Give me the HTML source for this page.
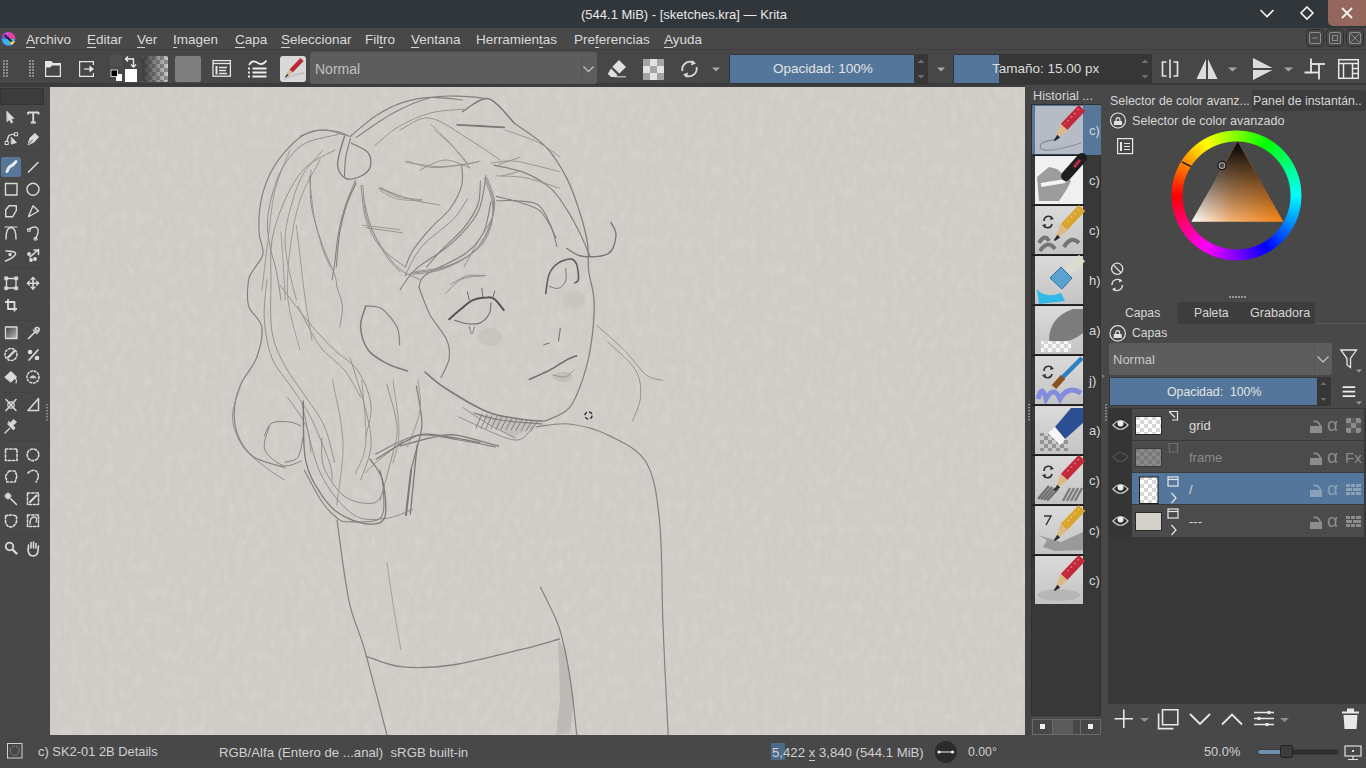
<!DOCTYPE html>
<html><head><meta charset="utf-8">
<style>
*{margin:0;padding:0;box-sizing:border-box}
html,body{width:1366px;height:768px;overflow:hidden;background:#484848;font-family:"Liberation Sans",sans-serif;color:#d4d4d4}
div,span,svg{position:absolute}
.t{white-space:nowrap;line-height:1}
.mi{top:33px;font-size:13.5px;color:#dadada}
.mi u{text-decoration:none;border-bottom:1px solid #d0d0d0;padding-bottom:0}
</style></head><body>
<!-- base regions -->
<div style="left:0;top:0;width:1366px;height:28px;background:#31363b"></div>
<div style="left:0;top:28px;width:1366px;height:21px;background:#484848"></div>
<div style="left:0;top:49px;width:1366px;height:1px;background:#3f3f3f"></div>
<div style="left:0;top:50px;width:1366px;height:33px;background:#474747"></div>
<div style="left:0;top:83px;width:1366px;height:2px;background:#3a3a3a"></div><div style="left:0;top:85px;width:1025px;height:2px;background:#3d3d3d"></div>
<div style="left:50px;top:87px;width:975px;height:648px;background:#cfccc7"></div>
<div id="canvas" style="left:50px;top:87px;width:975px;height:648px;overflow:hidden"><svg style="left:0;top:0" width="975" height="648" viewBox="50 87 975 648">
<defs><filter id="tex" x="0" y="0" width="100%" height="100%"><feTurbulence type="fractalNoise" baseFrequency="0.14 0.08" numOctaves="3" seed="7"/><feColorMatrix type="matrix" values="0 0 0 0 1  0 0 0 0 1  0 0 0 0 0.98  0 0 0 -2.2 1.25"/></filter></defs>
<rect x="50" y="87" width="975" height="648" filter="url(#tex)" opacity="0.13"/>
<defs><filter id="soft" x="-5%" y="-5%" width="110%" height="110%"><feGaussianBlur stdDeviation="0.35"/></filter></defs>
<ellipse cx="490" cy="337" rx="12" ry="9" fill="#b8b2ad" opacity="0.35"/>
<ellipse cx="574" cy="300" rx="11" ry="9" fill="#b8b2ad" opacity="0.3"/>
<ellipse cx="563" cy="377" rx="10" ry="5" fill="#a8a39f" opacity="0.35"/>
<path d="M558 640 L566 650 L574 700 L570 733 L556 735 L560 700 Z" fill="#b0aca8" opacity="0.6"/>
<path d="M478 414 L540 423 L512 438 Z" fill="#9d9a96" opacity="0.25"/>
<g fill="none" stroke-linecap="round" filter="url(#soft)" opacity="0.85">
<path d="M345.0 135.2 C341.5 134.3 331.1 130.0 324.2 130.0 C317.2 130.0 310.2 131.1 303.3 135.2 C296.4 139.3 288.4 147.5 282.5 154.7 C276.6 161.8 271.9 169.8 268.2 178.1 C264.5 186.3 261.9 195.1 260.4 204.2 C258.9 213.3 258.7 224.6 259.1 232.8 C259.5 241.1 263.9 247.6 263.0 253.7 C262.1 259.8 256.3 264.9 253.9 269.3 C251.5 273.7 249.5 273.9 248.6 280.0 C247.7 286.1 246.4 298.2 248.6 306.0 C250.8 313.8 260.4 318.2 261.7 326.9 C263.0 335.6 260.0 348.4 256.5 358.0 C253.0 367.6 244.5 375.5 240.8 384.2 C237.1 392.9 234.7 401.5 234.3 410.2 C233.9 418.9 234.9 428.4 238.2 436.2 C241.5 444.1 246.1 451.8 253.9 457.0 C261.7 462.2 279.8 465.8 285.0 467.5" stroke="#777470" stroke-width="1.2"/>
<path d="M335.0 150.0 C330.0 153.0 313.3 159.7 305.0 168.0 C296.7 176.3 290.5 188.0 285.0 200.0 C279.5 212.0 274.3 226.7 272.0 240.0 C269.7 253.3 271.0 264.7 271.0 280.0 C271.0 295.3 269.7 317.7 272.0 332.0 C274.3 346.3 279.3 355.1 285.0 366.0 C290.7 376.9 299.5 387.2 306.0 397.2 C312.5 407.2 319.4 414.9 324.2 425.8 C329.0 436.7 332.9 456.2 334.6 462.3" stroke="#8a8782" stroke-width="1.0"/>
<path d="M311.0 170.0 C311.0 175.7 309.2 191.8 311.0 204.0 C312.8 216.2 317.7 231.2 321.6 243.0 C325.5 254.8 332.0 267.2 334.6 274.5 C337.2 281.8 335.7 281.8 337.0 287.0 C338.3 292.2 341.9 299.3 342.4 306.0 C342.9 312.7 340.2 323.5 339.8 327.0" stroke="#858280" stroke-width="1.0"/>
<path d="M355.4 180.8 C353.7 185.1 347.8 198.1 345.0 206.8 C342.2 215.5 340.2 223.3 338.5 232.8 C336.8 242.3 335.7 256.1 334.6 264.0 C333.5 271.9 332.4 277.3 332.0 280.0" stroke="#777470" stroke-width="1.1"/>
<path d="M280.0 285.0 C284.3 290.7 297.3 308.6 306.0 319.0 C314.7 329.4 323.3 339.0 332.0 347.7 C340.7 356.4 351.5 361.4 358.0 371.0 C364.5 380.6 369.7 394.1 371.0 405.0 C372.3 415.9 366.7 431.0 365.8 436.2" stroke="#8a8782" stroke-width="1.0"/>
<path d="M264.3 436.0 C265.6 433.8 267.7 425.3 272.0 423.0 C276.3 420.7 285.2 421.5 290.0 422.0 C294.8 422.5 298.9 425.2 300.7 425.8" stroke="#777470" stroke-width="1.0"/>
<path d="M303.3 436.0 C302.4 439.5 301.1 452.6 298.0 457.0 C294.9 461.4 287.2 461.4 285.0 462.3" stroke="#777470" stroke-width="1.0"/>
<path d="M304.2 470.0 C307.1 475.2 315.9 493.0 321.4 501.0 C326.9 509.0 332.4 514.5 337.0 518.0 C341.6 521.5 341.8 521.8 349.0 521.8 C356.2 521.8 374.2 523.5 380.0 518.3 C385.8 513.1 383.5 498.8 383.5 490.7 C383.5 482.6 380.6 473.4 380.0 470.0" stroke="#777470" stroke-width="1.1"/>
<path d="M350.2 358.0 C352.8 366.7 362.3 395.4 365.8 410.2 C369.3 425.0 371.9 435.1 371.0 446.7 C370.1 458.3 362.3 474.4 360.6 480.0" stroke="#8a8782" stroke-width="1.0"/>
<path d="M386.7 384.0 C388.4 391.0 396.1 413.6 397.0 425.8 C397.9 438.0 394.7 444.6 391.9 457.0 C389.1 469.4 382.0 492.8 380.0 500.0" stroke="#8a8782" stroke-width="1.0"/>
<path d="M402.3 441.5 C398.0 445.0 382.3 457.1 376.2 462.3 C370.2 467.5 367.5 471.0 365.8 472.7" stroke="#8a8782" stroke-width="1.0"/>
<path d="M411.1 470.0 L406.0 514.9" stroke="#6e6b67" stroke-width="2.0"/>
<path d="M416.4 385.8 C417.3 392.2 422.1 412.5 421.9 424.0 C421.7 435.5 416.8 447.3 415.0 455.0 C413.2 462.7 411.7 467.5 411.0 470.0" stroke="#777470" stroke-width="1.3"/>
<path d="M344.5 136.2 C343.3 140.9 337.3 157.3 337.5 164.3 C337.7 171.3 341.8 176.5 345.7 178.4 C349.6 180.3 356.9 177.9 361.0 176.0 C365.1 174.1 369.1 170.6 370.3 166.7 C371.5 162.8 371.1 156.5 368.0 152.6 C364.9 148.7 354.2 144.8 351.5 143.2" stroke="#6e6b67" stroke-width="1.3"/>
<path d="M350.4 138.5 C349.6 141.6 346.7 151.1 345.7 157.3 C344.7 163.6 344.7 172.9 344.5 176.0" stroke="#6e6b67" stroke-width="1.1"/>
<path d="M350.2 136.5 C354.5 133.0 367.6 121.2 376.2 115.6 C384.9 109.9 393.1 105.6 402.3 102.6 C411.5 99.6 421.2 97.8 431.2 97.4 C441.3 97.0 457.3 99.6 462.5 100.0" stroke="#777470" stroke-width="1.2"/>
<path d="M462.5 111.7 C466.8 109.5 479.8 96.7 488.5 98.7 C497.2 100.7 510.2 119.4 514.6 123.5" stroke="#6e6b67" stroke-width="1.4"/>
<path d="M457.3 124.8 C461.1 125.0 472.2 125.6 480.0 126.0 C487.8 126.4 500.2 127.2 504.2 127.4" stroke="#6a6763" stroke-width="1.8"/>
<path d="M514.6 123.5 C519.8 127.4 537.1 137.8 545.8 146.9 C554.5 156.0 561.1 167.2 566.7 178.1 C572.4 188.9 576.2 201.2 579.7 212.0 C583.2 222.8 586.0 233.4 587.5 243.2 C589.0 253.0 587.6 261.4 588.7 271.0 C589.8 280.6 593.7 289.2 594.1 301.0 C594.5 312.8 593.2 329.2 591.4 342.0 C589.6 354.8 586.9 366.7 583.2 377.6 C579.6 388.6 575.4 400.6 569.5 407.7 C563.6 414.8 552.5 417.8 547.7 420.0 C542.9 422.2 541.9 420.8 540.8 421.0" stroke="#777470" stroke-width="1.3"/>
<path d="M400.0 130.0 C405.0 128.0 418.3 116.3 430.0 118.0 C441.7 119.7 458.3 133.0 470.0 140.0 C481.7 147.0 495.0 156.7 500.0 160.0" stroke="#8d8a85" stroke-width="1.0"/>
<path d="M420.0 170.0 C424.2 168.3 436.7 160.3 445.0 160.0 C453.3 159.7 465.8 166.7 470.0 168.0" stroke="#8d8a85" stroke-width="1.0"/>
<path d="M363.0 196.0 C364.8 202.1 367.9 221.0 373.6 232.8 C379.3 244.6 389.3 258.9 397.0 266.7 C404.7 274.5 416.2 277.5 420.0 279.7" stroke="#8a8782" stroke-width="1.0"/>
<path d="M378.9 188.6 C382.8 189.9 395.4 194.2 402.3 196.4 C409.2 198.6 413.7 200.2 420.0 201.6 C426.3 203.0 436.7 204.4 440.0 205.0" stroke="#8a8782" stroke-width="1.0"/>
<path d="M365.8 227.6 L402.3 232.8" stroke="#8d8a85" stroke-width="1.0"/>
<path d="M493.8 165.1 C499.0 166.4 515.5 169.0 525.0 172.9 C534.5 176.8 544.0 182.5 551.0 188.6 C558.0 194.7 561.9 202.0 566.7 209.4 C571.5 216.8 575.8 225.0 579.7 232.8 C583.6 240.6 588.4 252.4 590.1 256.3" stroke="#777470" stroke-width="1.2"/>
<path d="M496.4 196.4 C499.9 197.3 510.3 199.4 517.2 201.6 C524.1 203.8 532.8 205.9 538.0 209.4 C543.2 212.9 545.4 217.6 548.4 222.4 C551.4 227.2 554.9 235.4 556.2 238.0" stroke="#777470" stroke-width="1.1"/>
<path d="M486.0 175.5 C484.7 181.6 483.7 200.7 478.0 212.0 C472.3 223.3 462.4 233.6 452.0 243.2 C441.6 252.8 424.3 261.5 415.6 269.3 C406.9 277.1 402.6 286.6 400.0 290.0" stroke="#777470" stroke-width="1.1"/>
<path d="M491.0 201.6 C489.7 206.8 487.6 224.1 483.3 232.8 C479.0 241.5 474.7 246.8 465.1 253.7 C455.6 260.6 433.7 268.9 426.0 274.5 C418.3 280.1 420.2 285.2 419.0 287.3" stroke="#777470" stroke-width="1.1"/>
<path d="M611.0 222.4 C611.8 224.6 616.5 230.2 616.0 235.4 C615.5 240.6 613.9 250.2 608.3 253.7 C602.7 257.2 589.2 257.2 582.3 256.3 C575.4 255.4 569.3 249.7 566.7 248.4" stroke="#6e6b67" stroke-width="1.4"/>
<path d="M419.0 287.3 C420.8 291.9 425.4 306.0 430.0 314.7 C434.6 323.4 443.3 332.0 446.5 339.3 C449.7 346.6 450.1 352.0 449.2 358.4 C448.3 364.8 442.4 374.4 441.0 377.6" stroke="#777470" stroke-width="1.2"/>
<path d="M365.8 306.0 C364.9 309.5 360.2 319.6 360.6 327.0 C361.0 334.4 364.0 344.2 368.4 350.3 C372.8 356.4 380.2 359.8 386.7 363.3 C393.2 366.8 404.0 369.8 407.5 371.1" stroke="#6e6b67" stroke-width="1.5"/>
<path d="M365.8 306.0 C368.4 306.4 376.3 305.1 381.5 308.6 C386.7 312.1 394.0 320.8 397.0 326.9 C400.0 333.0 399.2 342.0 399.7 345.0" stroke="#777470" stroke-width="1.2"/>
<path d="M425.0 372.0 C428.3 374.7 434.7 381.4 445.0 388.0 C455.3 394.6 474.5 406.5 487.0 411.7 C499.5 416.9 511.0 417.4 520.0 419.0 C529.0 420.6 537.3 420.7 540.8 421.0" stroke="#6e6b67" stroke-width="1.5"/>
<path d="M473.8 413.0 C478.2 414.2 488.6 418.2 500.0 420.0 C511.4 421.8 535.2 423.3 542.2 424.0" stroke="#777470" stroke-width="1.2"/>
<path d="M462.9 407.7 C467.4 410.6 481.4 420.0 490.0 425.0 C498.6 430.0 510.7 435.6 514.8 437.7" stroke="#858280" stroke-width="1.0"/>
<path d="M400.0 446.0 C405.0 444.7 420.9 439.8 430.0 438.0 C439.1 436.2 443.3 433.7 454.7 435.0 C466.1 436.3 491.1 444.2 498.4 446.0" stroke="#777470" stroke-width="1.3"/>
<path d="M449.1 319.2 C451.2 317.4 457.9 311.5 461.9 308.3 C465.8 305.1 468.6 301.9 472.8 300.1 C477.1 298.3 483.8 297.5 487.4 297.4 C491.0 297.2 492.0 297.1 494.7 299.2 C497.4 301.3 502.3 308.3 503.8 310.1" stroke="#3e3c3a" stroke-width="2.0"/>
<path d="M454.6 320.2 C456.7 320.8 463.1 323.4 467.3 323.8 C471.6 324.2 476.5 324.6 480.1 322.9 C483.8 321.2 487.4 317.1 489.2 313.8 C491.0 310.5 490.7 304.6 491.0 302.8" stroke="#5e5b58" stroke-width="1.1"/>
<path d="M469.2 326.5 C469.6 327.7 471.0 333.8 471.9 333.8 C472.8 333.8 474.2 327.7 474.6 326.5" stroke="#6e6b67" stroke-width="1.0"/>
<path d="M467.3 291.9 L469.2 300.1" stroke="#5e5b58" stroke-width="1.0"/>
<path d="M481.9 288.3 L482.8 297.4" stroke="#5e5b58" stroke-width="1.0"/>
<path d="M494.7 291.0 L492.8 298.3" stroke="#5e5b58" stroke-width="1.0"/>
<path d="M445.5 293.7 C448.2 291.3 455.2 282.2 461.9 279.2 C468.6 276.2 481.7 276.1 485.6 275.5" stroke="#8a8782" stroke-width="1.0"/>
<path d="M545.7 293.7 C546.3 290.4 547.2 278.8 549.3 273.7 C551.4 268.6 554.9 265.2 558.5 262.8 C562.1 260.4 568.2 258.8 571.2 259.1 C574.2 259.4 575.5 261.2 576.7 264.6 C577.9 268.0 578.8 276.2 578.5 279.2 C578.2 282.2 575.4 282.2 574.8 282.8" stroke="#4e4c49" stroke-width="1.6"/>
<path d="M549.3 286.4 C550.8 286.7 555.8 289.2 558.5 288.3 C561.2 287.4 564.5 284.4 565.7 281.0 C566.9 277.6 565.7 270.3 565.7 268.2" stroke="#6e6b67" stroke-width="1.0"/>
<path d="M543.9 344.8 L549.3 343.0" stroke="#6e6b67" stroke-width="1.2"/>
<path d="M560.3 328.4 L558.5 341.1" stroke="#6e6b67" stroke-width="1.2"/>
<path d="M529.3 379.4 C532.6 377.9 542.9 373.6 549.3 370.3 C555.7 367.0 563.0 361.7 567.6 359.3 C572.2 356.9 575.2 356.3 576.7 355.7" stroke="#5e5b58" stroke-width="1.5"/>
<path d="M553.0 375.0 C555.0 375.3 561.5 377.8 565.0 377.0 C568.5 376.2 572.5 371.2 574.0 370.0" stroke="#8d8a85" stroke-width="1.0"/>
<path d="M596.9 325.6 C601.5 329.7 616.0 342.0 624.2 350.2 C632.4 358.4 639.7 369.8 646.1 374.8 C652.5 379.8 659.8 379.4 662.5 380.3" stroke="#8a8782" stroke-width="1.0"/>
<path d="M607.8 342.0 C612.4 346.6 629.7 360.3 635.2 369.4 C640.7 378.5 641.1 388.0 640.6 396.7 C640.1 405.4 633.8 417.2 632.4 421.3" stroke="#8a8782" stroke-width="1.0"/>
<path d="M536.7 426.8 C542.2 426.3 557.6 422.6 569.5 424.0 C581.4 425.4 595.0 428.6 607.8 435.0 C620.6 441.4 637.5 447.8 646.1 462.3 C654.7 476.8 656.8 494.6 659.6 521.8 C662.4 549.0 661.6 589.8 663.0 625.3 C664.4 660.8 667.3 716.7 668.2 735.0" stroke="#777470" stroke-width="1.2"/>
<path d="M337.0 520.0 C339.0 533.5 344.4 579.4 349.0 601.0 C353.6 622.6 358.2 627.1 364.5 649.4 C370.8 671.7 383.2 720.7 387.0 735.0" stroke="#777470" stroke-width="1.2"/>
<path d="M387.0 563.2 C388.2 571.0 391.7 595.6 394.0 610.0 C396.3 624.4 399.7 642.8 400.8 649.4" stroke="#9a9792" stroke-width="1.0"/>
<path d="M366.3 656.3 C372.1 658.0 386.4 665.2 400.8 666.7 C415.2 668.2 432.4 667.9 452.5 665.0 C472.6 662.1 503.7 653.7 521.5 649.4 C539.3 645.1 553.2 640.7 559.5 639.0" stroke="#777470" stroke-width="1.3"/>
<path d="M540.5 587.3 C543.7 594.2 554.6 613.8 559.5 628.7 C564.4 643.7 567.0 659.3 569.9 677.0 C572.8 694.7 575.6 725.3 576.8 735.0" stroke="#777470" stroke-width="1.2"/>
<path d="M356.2 137.4 C362.4 133.3 381.2 119.5 393.7 112.8 C406.2 106.1 419.5 100.2 431.2 97.5 C442.9 94.8 454.6 96.2 464.0 96.4 C473.4 96.6 483.5 98.3 487.4 98.7" stroke="#777470" stroke-width="1.1"/>
<path d="M375.0 145.6 C378.9 142.5 389.0 132.3 398.4 126.8 C407.8 121.3 420.3 115.7 431.2 112.8 C442.1 109.9 458.5 109.9 464.0 109.3" stroke="#8d8a85" stroke-width="1.0"/>
<path d="M300.0 136.2 C303.1 135.2 312.4 131.1 318.7 130.3 C324.9 129.5 332.4 130.5 337.5 131.5 C342.6 132.5 347.2 135.4 349.2 136.2" stroke="#777470" stroke-width="1.1"/>
<path d="M356.2 183.0 C354.6 186.5 349.6 196.0 346.9 204.2 C344.2 212.4 341.6 221.8 339.8 232.3 C338.0 242.8 336.9 261.2 336.3 267.0" stroke="#777470" stroke-width="1.1"/>
<path d="M361.0 185.4 C361.8 190.9 362.5 208.0 365.6 218.2 C368.7 228.3 373.1 238.2 379.7 246.3 C386.3 254.4 401.1 263.6 405.4 267.0" stroke="#858280" stroke-width="1.0"/>
<path d="M379.7 187.8 C382.8 189.3 391.4 195.1 398.4 197.1 C405.4 199.1 417.9 199.1 421.8 199.5" stroke="#8d8a85" stroke-width="1.0"/>
<path d="M431.2 124.5 C434.3 127.6 443.8 136.6 450.0 143.2 C456.2 149.8 465.6 160.8 468.7 164.3" stroke="#8d8a85" stroke-width="1.0"/>
<path d="M405.4 162.0 C411.3 162.8 428.5 166.7 440.6 166.7 C452.7 166.7 471.8 162.8 478.0 162.0" stroke="#8d8a85" stroke-width="1.0"/>
<path d="M461.7 164.3 C461.7 167.8 463.6 178.0 461.7 185.4 C459.8 192.8 455.1 201.8 450.0 208.8 C444.9 215.8 437.4 220.6 431.2 227.6 C424.9 234.6 416.8 244.4 412.5 251.0 C408.2 257.6 406.6 264.3 405.4 267.0" stroke="#777470" stroke-width="1.1"/>
<path d="M480.4 180.7 C480.0 184.6 480.7 196.4 478.0 204.2 C475.3 212.0 470.2 219.8 464.0 227.6 C457.8 235.4 446.9 244.4 440.6 251.0 C434.4 257.6 428.9 264.3 426.5 267.0" stroke="#777470" stroke-width="1.1"/>
<path d="M494.5 199.5 C494.1 202.6 494.9 211.2 492.1 218.2 C489.4 225.2 482.7 233.5 478.0 241.6 C473.3 249.7 466.3 262.8 464.0 267.0" stroke="#858280" stroke-width="1.0"/>
<path d="M499.2 164.3 L520.0 157.3" stroke="#8d8a85" stroke-width="1.0"/>
<path d="M501.5 176.0 L520.0 171.3" stroke="#8d8a85" stroke-width="1.0"/>
<path d="M309.4 176.0 C310.2 182.7 311.7 203.4 314.0 215.9 C316.3 228.4 320.6 242.5 323.4 251.0 C326.1 259.5 329.3 264.3 330.5 267.0" stroke="#8a8782" stroke-width="1.0"/>
<path d="M266.9 280.0 C266.5 286.5 263.4 306.0 264.3 319.0 C265.2 332.0 267.2 346.3 272.0 358.0 C276.8 369.7 286.5 379.4 293.0 389.4 C299.5 399.4 304.9 405.9 311.0 418.0 C317.1 430.1 325.9 452.0 329.4 462.3 C332.9 472.6 331.6 477.1 332.0 480.0" stroke="#8a8782" stroke-width="1.0"/>
<path d="M298.0 306.0 C301.5 312.5 311.2 334.2 319.0 345.0 C326.8 355.8 338.1 362.3 345.0 371.0 C351.9 379.7 358.0 392.8 360.6 397.2" stroke="#8d8a85" stroke-width="1.0"/>
<path d="M287.7 397.2 C290.8 402.0 302.1 416.7 306.0 425.8 C309.9 434.9 310.2 447.6 311.0 452.0" stroke="#8d8a85" stroke-width="1.0"/>
<path d="M269.3 426.2 C268.5 430.1 262.4 442.8 264.7 449.3 C267.0 455.9 277.0 463.6 283.2 465.5 C289.4 467.4 298.6 461.7 301.7 460.9" stroke="#777470" stroke-width="1.0"/>
<path d="M301.7 403.0 C304.8 414.6 311.6 453.9 320.1 472.4 C328.6 490.9 341.7 506.3 352.5 514.0 C363.3 521.7 374.8 519.4 384.8 518.6 C394.8 517.8 408.0 510.9 412.6 509.4" stroke="#858280" stroke-width="1.0"/>
<path d="M375.6 454.0 C382.5 450.9 403.3 437.8 417.2 435.5 C431.1 433.2 445.7 438.1 458.8 440.0 C471.9 441.9 489.6 445.8 495.7 447.0" stroke="#777470" stroke-width="1.2"/>
<path d="M417.2 444.7 L410.3 514.0" stroke="#6e6b67" stroke-width="1.3"/>
<path d="M458.8 417.0 C468.0 420.8 501.9 438.5 514.2 440.0 C526.5 441.5 529.6 428.5 532.7 426.2" stroke="#858280" stroke-width="1.0"/>
<path d="M290.0 150.0 C287.5 156.7 278.7 175.0 275.0 190.0 C271.3 205.0 270.2 223.3 268.0 240.0 C265.8 256.7 263.0 281.7 262.0 290.0" stroke="#8d8a85" stroke-width="0.9"/>
<path d="M320.0 160.0 C316.7 166.7 305.0 185.0 300.0 200.0 C295.0 215.0 292.0 233.3 290.0 250.0 C288.0 266.7 286.3 283.3 288.0 300.0 C289.7 316.7 298.0 341.7 300.0 350.0" stroke="#8d8a85" stroke-width="0.9"/>
<path d="M338.5 134.4 C333.0 135.9 314.2 138.5 305.3 143.3 C296.4 148.1 290.5 155.8 285.3 163.2 C280.1 170.6 277.2 178.3 274.3 187.5 C271.4 196.7 268.4 208.9 267.6 218.5 C266.9 228.1 268.3 236.2 269.8 245.1 C271.3 254.0 274.6 262.6 276.5 271.7 C278.4 280.8 280.2 295.3 280.9 300.0" stroke="#858280" stroke-width="1.0"/>
<path d="M362.8 185.3 C363.5 190.8 363.5 207.1 367.2 218.5 C370.9 229.9 379.5 245.1 385.0 254.0 C390.5 262.9 397.5 268.8 400.0 271.7" stroke="#8a8782" stroke-width="1.0"/>
<path d="M380.5 187.5 L400.0 196.4" stroke="#8d8a85" stroke-width="0.9"/>
<path d="M362.8 225.2 L400.0 229.6" stroke="#8d8a85" stroke-width="0.9"/>
<path d="M296.4 225.2 C297.1 231.5 299.3 250.3 300.8 262.8 C302.3 275.3 303.4 287.1 305.3 300.0 C307.2 312.9 310.9 333.3 312.0 340.0" stroke="#8d8a85" stroke-width="0.9"/>
<path d="M281.0 231.8 C281.4 237.0 282.4 251.4 283.1 262.8 C283.8 274.2 284.9 293.8 285.3 300.0" stroke="#8d8a85" stroke-width="0.9"/>
<path d="M323.0 150.0 C319.7 154.1 308.2 165.5 303.0 174.3 C297.8 183.1 294.9 193.1 292.0 203.0 C289.1 212.9 286.1 224.0 285.3 234.0 C284.6 244.0 285.6 251.8 287.5 262.8 C289.4 273.8 294.9 293.8 296.4 300.0" stroke="#8a8782" stroke-width="0.9"/>
<path d="M484.2 177.9 C485.6 182.1 491.5 194.6 492.5 202.9 C493.5 211.2 492.8 220.3 490.4 227.9 C488.0 235.5 484.8 242.5 477.9 248.8 C471.0 255.0 459.2 261.6 448.8 265.4 C438.3 269.2 421.0 270.6 415.4 271.7" stroke="#858280" stroke-width="1.0"/>
<path d="M485.7 177.9 C487.0 182.1 493.0 194.3 493.5 202.9 C494.0 211.5 492.2 221.3 488.9 229.4 C485.6 237.5 481.4 245.3 473.9 251.8 C466.4 258.2 454.3 264.3 443.8 267.9 C433.2 271.5 416.0 272.3 410.4 273.2" stroke="#858280" stroke-width="1.0"/>
<path d="M487.2 177.9 C488.4 182.1 494.5 194.1 494.5 202.9 C494.5 211.7 491.5 222.3 487.4 230.9 C483.3 239.5 478.0 248.2 469.9 254.8 C461.8 261.3 449.5 267.1 438.8 270.4 C428.0 273.7 411.0 274.0 405.4 274.7" stroke="#858280" stroke-width="1.0"/>
<path d="M434.2 130.0 C437.3 132.8 447.0 140.4 452.9 146.7 C458.8 152.9 466.8 164.0 469.6 167.5" stroke="#8d8a85" stroke-width="0.9"/>
<path d="M407.0 161.2 C411.2 162.3 423.3 166.8 432.0 167.5 C440.7 168.2 451.0 166.4 459.0 165.4 C467.0 164.4 476.5 161.9 480.0 161.2" stroke="#8d8a85" stroke-width="0.9"/>
<path d="M380.0 190.4 C382.8 191.8 389.8 197.0 396.7 198.8 C403.6 200.5 417.5 200.5 421.7 200.8" stroke="#8d8a85" stroke-width="0.9"/>
<path d="M467.5 198.8 C465.1 202.2 460.5 211.6 452.9 219.6 C445.3 227.6 429.7 237.3 421.7 246.7 C413.7 256.1 407.8 270.9 405.0 275.8" stroke="#858280" stroke-width="1.0"/>
<path d="M496.7 200.8 C499.8 200.8 508.5 200.1 515.4 200.8 C522.3 201.5 532.4 200.8 538.3 205.0 C544.2 209.2 547.7 218.9 550.8 225.8 C553.9 232.8 556.0 243.2 557.0 246.7" stroke="#777470" stroke-width="1.1"/>
<path d="M490.4 163.3 C494.6 163.0 503.8 159.8 515.4 161.2 C527.0 162.7 552.6 170.0 560.0 171.7" stroke="#8a8782" stroke-width="0.9"/>
<path d="M496.7 175.8 C501.5 176.2 515.2 175.8 525.8 177.9 C536.3 180.0 554.3 186.6 560.0 188.3" stroke="#8a8782" stroke-width="0.9"/>
<path d="M505.0 130.0 C510.6 132.1 529.1 138.0 538.3 142.5 C547.5 147.0 556.4 154.6 560.0 157.0" stroke="#8a8782" stroke-width="0.9"/>
<path d="M450.8 284.2 C453.6 282.8 461.9 277.2 467.5 275.8 C473.1 274.4 481.4 275.8 484.2 275.8" stroke="#858280" stroke-width="1.0"/>
<path d="M240.8 384.2 C239.4 389.8 232.1 407.1 232.5 417.5 C232.9 427.9 237.4 438.4 243.0 446.7 C248.6 455.0 258.9 461.9 265.8 467.5 C272.7 473.1 281.5 477.9 284.6 480.0" stroke="#858280" stroke-width="1.0"/>
<path d="M303.3 400.8 C303.6 410.5 302.6 443.9 305.4 459.2 C308.2 474.5 314.4 483.5 320.0 492.5 C325.6 501.5 331.1 508.1 338.8 513.3 C346.4 518.5 358.2 523.0 365.8 523.8 C373.4 524.5 381.8 524.8 384.6 517.5 C387.4 510.2 384.9 489.7 382.5 480.0 C380.1 470.3 372.1 462.7 370.0 459.2" stroke="#6e6b67" stroke-width="1.3"/>
<path d="M322.0 438.0 C322.3 442.9 320.2 457.7 324.0 467.5 C327.8 477.3 336.7 490.8 345.0 496.7 C353.3 502.6 367.4 504.4 374.0 503.0 C380.6 501.6 382.8 490.5 384.6 488.0" stroke="#858280" stroke-width="1.0"/>
<path d="M332.5 380.0 C334.2 390.4 342.3 421.7 343.0 442.5 C343.7 463.3 337.8 494.6 336.7 505.0" stroke="#8d8a85" stroke-width="0.9"/>
<path d="M361.7 380.0 C362.4 390.4 366.9 426.9 365.8 442.5 C364.8 458.1 357.1 468.5 355.4 473.8" stroke="#8d8a85" stroke-width="0.9"/>
<path d="M393.0 380.0 C394.0 388.7 399.0 418.2 399.0 432.0 C399.0 445.8 394.0 457.8 393.0 463.0" stroke="#8d8a85" stroke-width="0.9"/>
<path d="M418.0 380.0 C418.3 385.2 421.8 399.9 420.0 411.0 C418.2 422.1 409.6 440.8 407.5 446.7" stroke="#8d8a85" stroke-width="0.9"/>
<path d="M376.0 459.2 C381.2 456.1 398.8 444.6 407.5 440.4 C416.2 436.2 416.2 433.8 428.3 434.2 C440.4 434.6 471.4 441.1 480.0 442.5" stroke="#6e6b67" stroke-width="1.2"/>
<path d="M482.0 414.0 L476.0 428.0" stroke="#6e6b67" stroke-width="0.9"/>
<path d="M487.0 414.7 L481.0 428.3" stroke="#6e6b67" stroke-width="0.9"/>
<path d="M492.0 415.4 L486.0 428.6" stroke="#6e6b67" stroke-width="0.9"/>
<path d="M497.0 416.1 L491.0 428.9" stroke="#6e6b67" stroke-width="0.9"/>
<path d="M502.0 416.8 L496.0 429.2" stroke="#6e6b67" stroke-width="0.9"/>
<path d="M507.0 417.5 L501.0 429.5" stroke="#6e6b67" stroke-width="0.9"/>
<path d="M512.0 418.2 L506.0 429.8" stroke="#6e6b67" stroke-width="0.9"/>
<path d="M517.0 418.9 L511.0 430.1" stroke="#6e6b67" stroke-width="0.9"/>
<path d="M522.0 419.6 L516.0 430.4" stroke="#6e6b67" stroke-width="0.9"/>
<path d="M527.0 420.3 L521.0 430.7" stroke="#6e6b67" stroke-width="0.9"/>
<path d="M532.0 421.0 L526.0 431.0" stroke="#6e6b67" stroke-width="0.9"/>
<path d="M537.0 421.7 L531.0 431.3" stroke="#6e6b67" stroke-width="0.9"/>
</g></svg></div>
<div style="left:0;top:735px;width:1366px;height:33px;background:#484848"></div>

<!-- TITLE TEXT -->
<span class="t" style="left:581px;top:8px;font-size:13px;color:#e8e8e8">(544.1 MiB) - [sketches.kra] — Krita</span>
<div style="left:1328px;top:0;width:38px;height:26px;background:#95675c;border-bottom-left-radius:5px"></div>

<!-- MENU TEXT -->
<span class="t mi" style="left:26px"><u>A</u>rchivo</span>
<span class="t mi" style="left:87px"><u>E</u>ditar</span>
<span class="t mi" style="left:137px"><u>V</u>er</span>
<span class="t mi" style="left:173px"><u>I</u>magen</span>
<span class="t mi" style="left:235px"><u>C</u>apa</span>
<span class="t mi" style="left:281px"><u>S</u>eleccionar</span>
<span class="t mi" style="left:365px">Fil<u>t</u>ro</span>
<span class="t mi" style="left:411px"><u>V</u>entana</span>
<span class="t mi" style="left:476px">Herramien<u>t</u>as</span>
<span class="t mi" style="left:574px">Pre<u>f</u>erencias</span>
<span class="t mi" style="left:664px"><u>A</u>yuda</span>

<!-- TOOLBAR WIDGETS -->
<div style="left:310px;top:52px;width:287px;height:32px;background:#5d5d5d;border-radius:3px"></div>
<div style="left:581px;top:53px;width:1px;height:30px;background:#555"></div>
<span class="t" style="left:315px;top:62px;font-size:14px;color:#c0c0c0">Normal</span>
<div style="left:729px;top:54px;width:199px;height:30px;background:#363636;border-radius:2px"></div>
<div style="left:730px;top:55px;width:184px;height:28px;background:#53769a"></div>
<span class="t" style="left:773px;top:62px;font-size:13.5px;color:#e4e4e4">Opacidad: 100%</span>
<div style="left:953px;top:54px;width:199px;height:30px;background:#363636;border-radius:2px"></div>
<div style="left:954px;top:55px;width:45px;height:28px;background:#53769a"></div>
<span class="t" style="left:992px;top:62px;font-size:13.5px;color:#dcdcdc">Tamaño: 15.00 px</span>

<!-- TOOLBOX -->
<div style="left:0;top:88px;width:44px;height:17px;background:#3c3c3c;border:1px solid #333"></div>
<div style="left:1px;top:157px;width:20px;height:20px;background:#56779a;border-radius:2px"></div>

<!-- DOCKERS -->
<div style="left:1025px;top:87px;width:6px;height:648px;background:#434343"></div>
<div style="left:1031px;top:104px;width:70px;height:612px;background:#383838;border:1px solid #2f2f2f"></div>
<div style="left:1032px;top:105px;width:69px;height:50px;background:#56779a"></div>
<span class="t" style="left:1033px;top:90px;font-size:12.7px;color:#d6d6d6">Historial ...</span>
<span class="t" style="left:1110px;top:95px;font-size:12.4px;color:#d6d6d6">Selector de color avanz...</span>
<div style="left:1252px;top:90px;width:114px;height:21px;background:#3d3d3d;border-radius:2px"></div>
<span class="t" style="left:1253px;top:95px;font-size:12.3px;color:#d6d6d6">Panel de instantán..</span>
<span class="t" style="left:1132px;top:115px;font-size:12.6px;color:#d6d6d6">Selector de color avanzado</span>

<div style="left:1171px;top:130px;width:131px;height:131px;border-radius:50%;background:conic-gradient(from 270deg,#ff0000,#ffff00 60deg,#00ff00 120deg,#00ffff 180deg,#0000ff 240deg,#ff00ff 300deg,#ff0000 360deg);-webkit-mask:radial-gradient(circle,transparent 53.5px,#000 54.5px,#000 64.5px,transparent 65.5px);mask:radial-gradient(circle,transparent 53.5px,#000 54.5px,#000 64.5px,transparent 65.5px)"></div>
<!-- tabs -->
<div style="left:1177px;top:302px;width:138px;height:22px;background:#3d3d3d;border-radius:2px"></div>
<div style="left:1315px;top:323px;width:51px;height:1px;background:#5a5a5a"></div>
<span class="t" style="left:1125px;top:307px;font-size:12.2px;color:#d6d6d6">Capas</span>
<span class="t" style="left:1194px;top:307px;font-size:12.2px;color:#d6d6d6">Paleta</span>
<span class="t" style="left:1250px;top:307px;font-size:12.6px;color:#d6d6d6">Grabadora</span>
<span class="t" style="left:1132px;top:327px;font-size:12.2px;color:#d6d6d6">Capas</span>
<div style="left:1109px;top:343px;width:223px;height:32px;background:#5d5d5d;border-radius:3px"></div>
<div style="left:1314px;top:344px;width:1px;height:30px;background:#555"></div>
<span class="t" style="left:1113px;top:353px;font-size:13px;color:#c8c8c8">Normal</span>
<div style="left:1109px;top:377px;width:222px;height:29px;background:#363636;border-radius:2px"></div>
<div style="left:1110px;top:378px;width:207px;height:27px;background:#53769a"></div>
<span class="t" style="left:1167px;top:386px;font-size:12.3px;color:#e4e4e4">Opacidad:&nbsp; 100%</span>

<!-- layer list -->
<div style="left:1108px;top:408px;width:258px;height:296px;background:#383838"></div>
<div style="left:1132px;top:409px;width:232px;height:32px;background:#4b4b4b;border-bottom:1px solid #3a3a3a"></div>
<div style="left:1132px;top:441px;width:232px;height:32px;background:#4b4b4b;border-bottom:1px solid #3a3a3a"></div>
<div style="left:1132px;top:473px;width:232px;height:32px;background:#53769a;border-bottom:1px solid #3a3a3a"></div>
<div style="left:1132px;top:505px;width:232px;height:32px;background:#4b4b4b"></div>
<span class="t" style="left:1189px;top:419px;font-size:13px;color:#dadada">grid</span>
<span class="t" style="left:1189px;top:451px;font-size:13px;color:#8a8a8a">frame</span>
<span class="t" style="left:1189px;top:483px;font-size:13px;color:#dadada">/</span>
<span class="t" style="left:1189px;top:515px;font-size:13px;color:#dadada">---</span>

<!-- STATUS -->
<span class="t" style="left:38px;top:746px;font-size:12.9px;color:#d0d0d0">c) SK2-01 2B Details</span>
<span class="t" style="left:219px;top:746px;font-size:13.2px;color:#d0d0d0">RGB/Alfa (Entero de ...anal)&nbsp; sRGB built-in</span>
<div style="left:771px;top:743px;width:14px;height:17px;background:#4a6a88"></div>
<span class="t" style="left:772px;top:746px;font-size:13.2px;color:#d0d0d0">5,422 <u style="text-decoration:none;border-bottom:1px solid #ccc">x</u> 3,840 (544.1 MiB)</span>
<span class="t" style="left:968px;top:746px;font-size:12.3px;color:#d0d0d0">0.00°</span>
<span class="t" style="left:1204px;top:746px;font-size:12.8px;color:#d0d0d0">50.0%</span>

<svg style="left:0;top:0" width="1366" height="768" viewBox="0 0 1366 768">
<defs>
 <pattern id="chk4" x="0" y="0" width="8" height="8" patternUnits="userSpaceOnUse"><rect width="8" height="8" fill="#c9c9c9"/><rect width="4" height="4" fill="#8e8e8e"/><rect x="4" y="4" width="4" height="4" fill="#8e8e8e"/></pattern>
 <linearGradient id="gradfade" x1="0" y1="0" x2="1" y2="0"><stop offset="0" stop-color="#3c3c3c" stop-opacity="1"/><stop offset="1" stop-color="#3c3c3c" stop-opacity="0"/></linearGradient>
 <pattern id="chkw" x="0" y="0" width="8" height="8" patternUnits="userSpaceOnUse"><rect width="8" height="8" fill="#ffffff"/><rect width="4" height="4" fill="#d6d6d6"/><rect x="4" y="4" width="4" height="4" fill="#d6d6d6"/></pattern>
 <pattern id="chkg" x="0" y="0" width="8" height="8" patternUnits="userSpaceOnUse"><rect width="8" height="8" fill="#8a8a8a"/><rect width="4" height="4" fill="#7a7a7a"/><rect x="4" y="4" width="4" height="4" fill="#7a7a7a"/></pattern>
</defs>
<!-- title bar buttons -->
<g fill="none" stroke="#f2f2f2" stroke-width="1.6">
 <path d="M1260.5 10 L1267 16.5 L1273.5 10"/>
 <path d="M1307 7 L1313 13 L1307 19 L1301 13 Z"/>
 <path d="M1342 8 L1352 18 M1352 8 L1342 18" stroke-width="1.8"/>
</g>
<!-- krita logo -->
<g>
 <circle cx="8.5" cy="39" r="7" fill="#6a4fd8"/>
 <path d="M2 39 A6.5 6.5 0 0 0 15 39 Z" fill="#2fb8e8"/>
 <path d="M8.5 32 A7 7 0 0 1 15.5 39 L8.5 39 Z" fill="#e43f9a"/>
 <path d="M2.5 36 A7 7 0 0 1 8.5 32 L8.5 39 Z" fill="#c84fe0"/>
 <path d="M9 42 L15 41 A7 7 0 0 1 12 45 Z" fill="#f5d33a"/>
 <path d="M4.5 35 L11.5 41.5" stroke="#1d1d2a" stroke-width="2"/>
</g>
<!-- MDI buttons -->
<g fill="none" stroke="#2e2e2e" stroke-width="1">
 <rect x="1306.5" y="29.5" width="17" height="17" rx="3"/>
 <rect x="1326.5" y="29.5" width="17" height="17" rx="3"/>
 <rect x="1346.5" y="29.5" width="17" height="17" rx="3"/>
</g>
<g fill="none" stroke="#8c8c8c" stroke-width="1">
 <rect x="1309.5" y="32.5" width="11" height="11" rx="1.5"/><path d="M1312 38 H1318"/>
 <rect x="1329.5" y="32.5" width="11" height="11" rx="1.5"/><rect x="1332.5" y="35.5" width="5" height="5"/>
 <rect x="1349.5" y="32.5" width="11" height="11" rx="1.5"/><path d="M1350 33 L1360 43 M1360 33 L1350 43"/>
</g>
<!-- toolbar drag handles -->
<g fill="#8e8e8e">
 <rect x="3" y="60" width="2" height="2"/><rect x="6" y="60" width="2" height="2"/>
 <rect x="3" y="63" width="2" height="2"/><rect x="6" y="63" width="2" height="2"/>
 <rect x="3" y="66" width="2" height="2"/><rect x="6" y="66" width="2" height="2"/>
 <rect x="3" y="69" width="2" height="2"/><rect x="6" y="69" width="2" height="2"/>
 <rect x="3" y="72" width="2" height="2"/><rect x="6" y="72" width="2" height="2"/>
 <rect x="3" y="75" width="2" height="2"/><rect x="6" y="75" width="2" height="2"/>
 <rect x="29" y="60" width="2" height="2"/><rect x="32" y="60" width="2" height="2"/>
 <rect x="29" y="63" width="2" height="2"/><rect x="32" y="63" width="2" height="2"/>
 <rect x="29" y="66" width="2" height="2"/><rect x="32" y="66" width="2" height="2"/>
 <rect x="29" y="69" width="2" height="2"/><rect x="32" y="69" width="2" height="2"/>
 <rect x="29" y="72" width="2" height="2"/><rect x="32" y="72" width="2" height="2"/>
 <rect x="29" y="75" width="2" height="2"/><rect x="32" y="75" width="2" height="2"/>
</g>
<!-- folder -->
<g fill="none" stroke="#e6e6e6" stroke-width="1.2">
 <path d="M45.6 76.4 V61.6 H51 L53 63.6 H60.4 V76.4 Z"/>
</g>
<path d="M45.6 61.6 H51 L53 63.6 H60.4 V65.5 H52 L50 67.5 H45.6 Z" fill="#e6e6e6"/>
<!-- export -->
<g fill="none" stroke="#e6e6e6" stroke-width="1.2">
 <path d="M93.4 65 V61.6 H79.6 V76.4 H93.4 V73"/>
 <path d="M84 69 H91"/>
</g>
<path d="M89.5 65.5 L94 69 L89.5 72.5 Z" fill="#e6e6e6"/>
<!-- FG/BG -->
<rect x="110" y="55" width="12" height="12" fill="#4f4f4f"/>
<g fill="none" stroke="#eeeeee" stroke-width="1.3">
 <path d="M125.5 59 H133.5 V66.5"/>
 <path d="M128 56.5 L125.5 59 L128 61.5"/>
 <path d="M131 64.5 L133.5 67 L136 64.5"/>
</g>
<rect x="116" y="74" width="6" height="7" fill="#ffffff"/>
<rect x="111" y="70" width="6.5" height="6.5" fill="#000" stroke="#fff" stroke-width="0.8"/>
<rect x="125" y="69" width="12" height="13" fill="#ffffff"/>
<!-- gradient -->
<g>
 <rect x="142" y="56" width="26" height="26" rx="2" fill="url(#chk4)"/>
 <rect x="142" y="56" width="26" height="26" rx="2" fill="url(#gradfade)"/>
</g>
<!-- pattern -->
<rect x="175" y="56" width="26" height="26" rx="2" fill="#7e7e7e"/>
<!-- dialog icon -->
<g fill="none" stroke="#e6e6e6" stroke-width="1.3">
 <rect x="213" y="60.6" width="17.4" height="15.6"/>
 <path d="M213 63.5 H230.4"/>
 <path d="M219 67.5 H227 M219 70.5 H226 M219 73.5 H227"/>
</g>
<rect x="215.5" y="66" width="2" height="8.5" fill="#e6e6e6"/>
<!-- wave list -->
<g fill="none" stroke="#ececec">
 <path d="M249 65 C252 60 255 61 258 63 C261 65 264 64 266.5 60.5" stroke-width="1.6"/>
 <path d="M252.5 68.5 H266.5 M252.5 72.5 H266.5 M252.5 76.5 H266.5" stroke-width="1.8"/>
</g>
<g fill="#ececec"><rect x="248" y="67.5" width="2" height="2"/><rect x="248" y="71.5" width="2" height="2"/><rect x="248" y="75.5" width="2" height="2"/></g>
<!-- brush preset -->
<rect x="280" y="56" width="26" height="26" rx="3" fill="#d8d8d8"/>
<path d="M284 79 Q292 75 304 73" stroke="#c2c2c2" stroke-width="2" fill="none"/>
<path d="M291 71 L302 59.5" stroke="#b82a35" stroke-width="4.5" stroke-linecap="butt"/>
<path d="M291 71 L287 75" stroke="#d8b88a" stroke-width="3.5"/>
<path d="M288 74.5 L285.5 77" stroke="#333" stroke-width="1.5"/>
<!-- combo chevron -->
<path d="M583.5 66.5 L588.5 71.5 L593.5 66.5" fill="none" stroke="#bdbdbd" stroke-width="1.3"/>
<!-- eraser -->
<path d="M619 60 L626 67 L619.3 73.5 L612.3 66.8 Z" fill="#e0e0e0"/>
<path d="M611 68.5 L617.5 75 L615.5 77 L611 77 L607.8 73.8 Z" fill="#e0e0e0"/>
<path d="M615 76.8 H626" stroke="#e0e0e0" stroke-width="1"/>
<!-- checker -->
<g>
 <rect x="643" y="59" width="21" height="21" fill="#e2e2e2"/>
 <rect x="643" y="59" width="7" height="7" fill="#a4a4a4"/><rect x="657" y="59" width="7" height="7" fill="#a4a4a4"/>
 <rect x="650" y="66" width="7" height="7" fill="#a4a4a4"/>
 <rect x="643" y="73" width="7" height="7" fill="#a4a4a4"/><rect x="657" y="73" width="7" height="7" fill="#a4a4a4"/>
</g>
<!-- refresh -->
<g fill="none" stroke="#d8d8d8" stroke-width="1.8">
 <path d="M682.5 71 A7.5 7.5 0 0 1 693 62.5"/>
 <path d="M696.5 67 A7.5 7.5 0 0 1 686 75.5"/>
</g>
<path d="M692 60 L696 63.5 L691 65.5 Z M687 78 L683 74.5 L688 72.5 Z" fill="#d8d8d8"/>
<path d="M712 67.5 H720 L716 71.5 Z" fill="#a8a8a8"/>
<!-- opacity spin + dropdown -->
<path d="M917.5 63 L921 59.5 L924.5 63 Z M917.5 75 L921 78.5 L924.5 75 Z" fill="#6f6f6f"/>
<path d="M937 67.5 H945 L941 71.5 Z" fill="#a8a8a8"/>
<path d="M1141.5 63 L1145 59.5 L1148.5 63 Z M1141.5 75 L1145 78.5 L1148.5 75 Z" fill="#6f6f6f"/>
<!-- wrap -->
<g fill="none" stroke="#e6e6e6" stroke-width="1.6">
 <path d="M1166.5 62 H1162.5 V76 H1166.5"/>
 <path d="M1173.5 62 H1177.5 V76 H1173.5"/>
 <path d="M1170 59.5 V78"/>
</g>
<!-- mirror H -->
<path d="M1196.5 79 L1206 59 V79 Z M1208 59 L1217.5 79 H1208 Z" fill="#dcdcdc"/>
<path d="M1228 67.5 H1237 L1232.5 71.5 Z" fill="#a8a8a8"/>
<!-- mirror V -->
<path d="M1253 58 L1272.5 68 H1253 Z M1253 70 H1272.5 L1253 80 Z" fill="#dcdcdc"/>
<path d="M1284 67.5 H1293 L1288.5 71.5 Z" fill="#a8a8a8"/>
<!-- crop -->
<g fill="none" stroke="#e6e6e6" stroke-width="1.8">
 <path d="M1311 58.5 V72.5 H1304.5"/>
 <path d="M1311 64 H1325"/>
 <path d="M1319 64 V79.5"/>
 <path d="M1311 72.5 H1319"/>
</g>
<!-- layout -->
<g fill="none" stroke="#e6e6e6" stroke-width="1.5">
 <rect x="1338.7" y="59.7" width="19.6" height="18.6"/>
 <path d="M1338.7 63.5 H1358.3 M1343.5 63.5 V78.3 M1352.5 63.5 V78.3 M1352.5 68.5 H1358.3 M1352.5 73.5 H1358.3"/>
</g>
<!-- TOOLBOX ICONS -->
<g fill="none" stroke="#dadada" stroke-width="1.4" stroke-linecap="round" stroke-linejoin="round">
 <!-- row1 -->
 <path d="M7 111.5 L14 118.5 L11 118.8 L12.8 122.3 L11.2 123 L9.5 119.5 L7.2 121.5 Z" fill="#dadada" stroke-width="0.8"/>
 <path d="M28 112.5 H38.5 M28 112 V114.5 M38.5 112 V114.5 M33.2 112.5 V122.5 M30.8 122.5 H35.8" stroke-width="1.8" stroke-linecap="butt"/>
 <!-- row2 -->
 <path d="M6.5 143 L8.5 136 Q10 134 15 134.5"/>
 <rect x="5.2" y="141.5" width="3" height="3" fill="#3b3b3b" stroke-width="1.1"/>
 <rect x="14.5" y="132.8" width="3" height="3" fill="#3b3b3b" stroke-width="1.1"/>
 <path d="M11.5 137.5 L16.5 142.5 L11.5 144 Z" fill="#dadada" stroke-width="0.8"/>
 <path d="M28 144.5 L30 138 L35 133.5 L38.5 137 L34 142 Z" fill="#dadada" stroke-width="1"/>
 <path d="M28.3 144.2 L32.5 140" stroke="#4a4a4a" stroke-width="1"/>
 <!-- row3 selected brush -->
 <path d="M7 171.5 Q9 166 12 165.5 Q15 163 16 161.5" stroke="#eaeaea" stroke-width="3"/>
 <path d="M28.5 172 L38 162.5" stroke-width="1.6"/>
 <!-- row4 -->
 <rect x="5.5" y="183.5" width="11.5" height="11.5"/>
 <circle cx="33" cy="189.2" r="6"/>
 <!-- row5 -->
 <path d="M9 205.7 H16.3 V210.5 L12.5 216.8 H5.7 V210 Z"/>
 <path d="M28.5 216.5 L33 205.8 L38.5 211 L29 216.5"/>
 <!-- row6 -->
 <path d="M6 239 Q6 227.5 11 227.5 Q16 227.5 16 239"/>
 <path d="M5 227 H17" stroke-width="1"/>
 <path d="M29 229.5 Q31 227 34.5 227 Q39 227 38 233 L35.5 239" />
 <rect x="27.8" y="228.8" width="2.5" height="2.5" stroke-width="1"/>
 <rect x="34.5" y="237.5" width="2.5" height="2.5" stroke-width="1"/>
 <!-- row7 -->
 <path d="M6 251 Q16 251 15.5 254 Q14 258 5.5 261" stroke-width="1.6"/>
 <circle cx="10" cy="254.5" r="1" fill="#dadada"/>
 <path d="M30 257 L38.5 249.5 M34 250 H38.5 V254.5" stroke-width="1.6"/>
 <circle cx="29" cy="254" r="1.2" fill="#dadada"/><circle cx="31" cy="260" r="1.2" fill="#dadada"/><circle cx="35" cy="259" r="1.2" fill="#dadada"/>
 <!-- separator -->
 <!-- row8 transform / move -->
 <rect x="6.5" y="278.5" width="9.5" height="9.5" stroke-width="1.3"/>
 <rect x="4.8" y="276.8" width="3" height="3" fill="#dadada" stroke-width="0.6"/>
 <rect x="14.8" y="276.8" width="3" height="3" fill="#dadada" stroke-width="0.6"/>
 <rect x="4.8" y="286.8" width="3" height="3" fill="#dadada" stroke-width="0.6"/>
 <rect x="14.8" y="286.8" width="3" height="3" fill="#dadada" stroke-width="0.6"/>
 <path d="M27.5 283.2 H38.5 M33 277.5 V289" stroke-width="1.6"/>
 <path d="M31 279.5 L33 277.3 L35 279.5 M31 287 L33 289.2 L35 287 M29.5 281.2 L27.3 283.2 L29.5 285.2 M36.5 281.2 L38.7 283.2 L36.5 285.2" stroke-width="1.2"/>
 <!-- row9 crop -->
 <path d="M8 299 V309 H17 M5 302 H14.5 V311.5" stroke-width="1.8" stroke-linecap="butt"/>
 <!-- row10 gradient / picker -->
 <defs><linearGradient id="gt" x1="0" y1="0" x2="1" y2="1"><stop offset="0" stop-color="#3a3a3a"/><stop offset="1" stop-color="#bdbdbd"/></linearGradient></defs><rect x="5.5" y="327" width="11.5" height="11.5" fill="url(#gt)" stroke-width="1.3"/>
 <path d="M28.5 338.5 L35 332 M33.5 330 L37 333.5 M35 328.5 Q37 326.5 38.7 328.3 Q40 330 38 332 Z" stroke-width="1.6"/>
 <!-- row11 smart patch / % -->
 <circle cx="11" cy="354.5" r="6" stroke-dasharray="1.6 2" stroke-width="1.6"/>
 <path d="M8 357.5 L14.5 351" stroke-width="2.2"/>
 <path d="M29 360 L38 350" stroke-width="1.8"/>
 <circle cx="30" cy="352" r="1.6" fill="#dadada"/><circle cx="37" cy="358" r="1.6" fill="#dadada"/>
 <!-- row12 fill / enclosed fill -->
 <path d="M5 377 L11 371.5 L16.5 377 L11 382 Z" fill="#dadada" stroke-width="1"/>
 <path d="M15.5 378 Q17 381 16 383" stroke-width="1.2"/>
 <circle cx="33" cy="377" r="6" stroke-dasharray="1.6 2" stroke-width="1.6"/>
 <path d="M30 377.5 Q33 374 36 377.5 Z" fill="#dadada" stroke-width="1"/>
 <!-- row13 assistant / measure -->
 <path d="M6 399.5 L16 410.5 M16 399.5 L6 410.5" stroke-width="1.5"/>
 <circle cx="11" cy="405" r="3.2" stroke-width="1.2"/>
 <path d="M28 410.5 H38.5 V398.5 Z" stroke-width="1.5"/>
 <!-- row14 reference -->
 <path d="M5 433 L9.5 428.5" stroke-width="1.4"/>
 <path d="M8 424.5 L13.5 430 L15 428 L13 425.5 L16.5 422 L13.5 419.5 L10.5 423 L9 421.5 Z" fill="#dadada" stroke-width="0.8"/>
 <!-- row15 sel rect / ellipse -->
 <rect x="5.5" y="449" width="11.5" height="11.5" stroke-dasharray="2.4 1.8" stroke-width="1.6"/>
 <circle cx="33" cy="454.8" r="5.8" stroke-dasharray="2.2 1.8" stroke-width="1.6"/>
 <!-- row16 poly / free -->
 <path d="M9 471 H15 L17 476 L15 482 H7 L5.5 476 Z" stroke-dasharray="2.2 1.8" stroke-width="1.6"/>
 <path d="M28 473 Q33 468 37 472 Q40 476 36 482" stroke-dasharray="2.2 1.8" stroke-width="1.6"/>
 <!-- row17 wand / similar -->
 <path d="M6 494 L10 498 M10 494 L6 498 M8 493 V499 M5 496 H11 M10 498 L16.5 504.5" stroke-width="1.5"/>
 <rect x="27.5" y="493" width="11" height="11.5" stroke-dasharray="2.4 1.8" stroke-width="1.6"/>
 <path d="M30 502 L36.5 495.5" stroke-width="2"/>
 <!-- row18 bezier sel / magnetic -->
 <path d="M5.5 516 Q11 514 16.5 516 V522 Q14 527 11 527 Q7 527 5.5 522 Z" stroke-dasharray="2.2 1.8" stroke-width="1.6"/>
 <rect x="27.5" y="515" width="11" height="11.5" stroke-dasharray="2.4 1.8" stroke-width="1.6"/>
 <path d="M30 524 Q30 517 34 517 Q38 517 36 522" stroke-width="1.3"/>
 <!-- row19 zoom / pan -->
 <circle cx="9.5" cy="546.5" r="3.8" stroke-width="1.8"/>
 <path d="M12.5 549.5 L16.5 553.5" stroke-width="2.4"/>
 <path d="M28.5 549 V545 M31 548 V542.5 M33.5 548 V542 M36 548 V543.5 M28 548 Q28 556 33 556 Q38 556 38 550 L38.5 546" stroke-width="1.6"/>
</g>
<!-- separators -->
<g fill="#434343">
 <rect x="3" y="150" width="40" height="1"/>
 <rect x="3" y="268" width="40" height="1"/>
 <rect x="3" y="320" width="40" height="1"/>
 <rect x="3" y="392" width="40" height="1"/>
 <rect x="3" y="440" width="40" height="1"/>
 <rect x="3" y="534" width="40" height="1"/>
</g>
<!-- side handle dots -->
<g fill="#8a8a8a">
 <rect x="46" y="404" width="2" height="1.5"/><rect x="46" y="407" width="2" height="1.5"/><rect x="46" y="410" width="2" height="1.5"/><rect x="46" y="413" width="2" height="1.5"/><rect x="46" y="416" width="2" height="1.5"/><rect x="46" y="419" width="2" height="1.5"/>
 <rect x="1028" y="404" width="2" height="1.5"/><rect x="1028" y="407" width="2" height="1.5"/><rect x="1028" y="410" width="2" height="1.5"/><rect x="1028" y="413" width="2" height="1.5"/><rect x="1028" y="416" width="2" height="1.5"/><rect x="1028" y="419" width="2" height="1.5"/>
 <rect x="1105" y="404" width="2" height="1.5"/><rect x="1105" y="407" width="2" height="1.5"/><rect x="1105" y="410" width="2" height="1.5"/><rect x="1105" y="413" width="2" height="1.5"/><rect x="1105" y="416" width="2" height="1.5"/><rect x="1105" y="419" width="2" height="1.5"/>
</g>
<defs>
 <linearGradient id="triW" x1="0" y1="0" x2="1" y2="0"><stop offset="0" stop-color="#ffffff"/><stop offset="0.45" stop-color="#f5b070"/><stop offset="1" stop-color="#f58210"/></linearGradient>
 <linearGradient id="triK" x1="0" y1="0" x2="0" y2="1"><stop offset="0" stop-color="#000" stop-opacity="1"/><stop offset="0.55" stop-color="#000" stop-opacity="0.45"/><stop offset="1" stop-color="#000" stop-opacity="0"/></linearGradient>
 <linearGradient id="pencilR" x1="0" y1="0" x2="1" y2="1"><stop offset="0" stop-color="#e04050"/><stop offset="1" stop-color="#901828"/></linearGradient>
 <linearGradient id="thumbbg" x1="0" y1="0" x2="0" y2="1"><stop offset="0" stop-color="#dadada"/><stop offset="1" stop-color="#c4c4c4"/></linearGradient>
</defs>
<!-- docker lock icons -->
<g fill="none" stroke="#e0e0e0" stroke-width="1.2">
 <circle cx="1118" cy="120.5" r="7.5"/>
 <circle cx="1117.7" cy="333.4" r="7.7"/>
</g>
<g fill="#e0e0e0">
 <path d="M1114 121 H1122 V125 H1114 Z M1115.5 121 V119.5 A2.5 2.5 0 0 1 1120.5 119.5 V121 H1119.3 V119.7 A1.3 1.3 0 0 0 1116.7 119.7 V121 Z"/>
 <path d="M1113.7 334 H1121.7 V338 H1113.7 Z M1115.2 334 V332.5 A2.5 2.5 0 0 1 1120.2 332.5 V334 H1119 V332.7 A1.3 1.3 0 0 0 1116.4 332.7 V334 Z"/>
</g>
<!-- settings icon -->
<g fill="none" stroke="#e6e6e6" stroke-width="1.2">
 <rect x="1117.6" y="138.6" width="15" height="15"/>
 <path d="M1124 143.5 H1130 M1124 146.5 H1130 M1124 149.5 H1130"/>
</g>
<rect x="1120" y="142" width="2" height="9" fill="#e6e6e6"/>
<!-- color wheel -->

<path d="M1237.7 141.6 L1283.5 221.8 L1191.3 221.8 Z" fill="url(#triW)"/>
<path d="M1237.7 141.6 L1283.5 221.8 L1191.3 221.8 Z" fill="url(#triK)"/>
<path d="M1182 162 L1191 166.5" stroke="#222" stroke-width="1.4"/>
<circle cx="1222" cy="165.5" r="4" fill="none" stroke="#111" stroke-width="1.3"/>
<circle cx="1222" cy="165.5" r="3" fill="none" stroke="#ddd" stroke-width="0.8"/>
<!-- no-entry / refresh -->
<g fill="none" stroke="#e0e0e0" stroke-width="1.3">
 <circle cx="1117.2" cy="268.8" r="5.6"/>
 <path d="M1113.3 264.9 L1121.1 272.7"/>
 <path d="M1112 285 A5.3 5.3 0 0 1 1120.5 280.5"/>
 <path d="M1122.4 285 A5.3 5.3 0 0 1 1114 289.5"/>
</g>
<path d="M1119.5 278.5 L1122.5 281 L1119 282.5 Z M1115 291.5 L1112 289 L1115.5 287.5 Z" fill="#e0e0e0"/>
<!-- splitter dots -->
<g fill="#9a9a9a"><rect x="1229" y="296" width="2" height="2"/><rect x="1232" y="296" width="2" height="2"/><rect x="1235" y="296" width="2" height="2"/><rect x="1238" y="296" width="2" height="2"/><rect x="1241" y="296" width="2" height="2"/><rect x="1244" y="296" width="2" height="2"/></g>
<!-- layers combo chevron, filter, menu -->
<path d="M1317.5 356.5 L1323 362 L1328.5 356.5" fill="none" stroke="#bdbdbd" stroke-width="1.3"/>
<path d="M1340.8 350 H1356.5 L1350.5 358.5 V367.5 L1347 365 V358.5 Z" fill="none" stroke="#e6e6e6" stroke-width="1.3"/>
<path d="M1356 369.5 H1362 L1359 372.5 Z" fill="#9a9a9a"/>
<path d="M1342.7 387.2 H1355.2 M1342.7 391.7 H1355.2 M1342.7 396.2 H1355.2" stroke="#ececec" stroke-width="1.8"/>
<path d="M1356 401.5 H1362 L1359 404.5 Z" fill="#9a9a9a"/>
<path d="M1320.5 385 L1323.5 382 L1326.5 385 Z M1320.5 398 L1323.5 401 L1326.5 398 Z" fill="#6f6f6f"/>
<!-- layer list eye column -->
<rect x="1109" y="409" width="23" height="129" fill="#353535"/>
<g>
 <path d="M1113 425 Q1120.5 416.5 1128 425 Q1120.5 433.5 1113 425 Z" fill="#2d2d2d" stroke="#cfcfcf" stroke-width="1.2"/>
 <circle cx="1120.5" cy="423.5" r="3" fill="#ececec"/>
 <path d="M1113 457 Q1120.5 448.5 1128 457 Q1120.5 465.5 1113 457 Z" fill="none" stroke="#555" stroke-width="1.2"/>
 <path d="M1113 489 Q1120.5 480.5 1128 489 Q1120.5 497.5 1113 489 Z" fill="#2d2d2d" stroke="#cfcfcf" stroke-width="1.2"/>
 <circle cx="1120.5" cy="487.5" r="3" fill="#ececec"/>
 <path d="M1113 521 Q1120.5 512.5 1128 521 Q1120.5 529.5 1113 521 Z" fill="#2d2d2d" stroke="#cfcfcf" stroke-width="1.2"/>
 <circle cx="1120.5" cy="519.5" r="3" fill="#ececec"/>
</g>
<!-- thumbs -->
<rect x="1135.5" y="416.5" width="26" height="18" fill="url(#chkw)" stroke="#2a2a2a" stroke-width="1"/>
<rect x="1135.5" y="448.5" width="26" height="18" fill="url(#chkg)" stroke="#3a3a3a" stroke-width="1"/>
<rect x="1139.5" y="477" width="18.5" height="26.5" fill="url(#chkw)" stroke="#1e1e1e" stroke-width="1"/>
<rect x="1135.5" y="512.5" width="26" height="18" fill="#d4d1cb" stroke="#2a2a2a" stroke-width="1"/>
<!-- type icons -->
<g fill="none" stroke="#e6e6e6" stroke-width="1.2">
 <path d="M1169 411.5 H1177.5 V420 H1172"/>
 <path d="M1169.5 412 L1175 417.5"/>
 <path d="M1169 443.5 H1177.5 V452 H1169.5 Z" stroke="#6e6e6e"/>
 <rect x="1168" y="477" width="10" height="9"/><path d="M1168 479.5 H1178"/>
 <path d="M1171.5 493 L1176 498 L1171.5 503"/>
 <rect x="1168" y="509" width="10" height="9"/><path d="M1168 511.5 H1178"/>
 <path d="M1171.5 525 L1176 530 L1171.5 535"/>
</g>
<!-- right layer icons -->
<rect x="1310" y="426" width="12" height="7" fill="#8c8c8c"/>
<path d="M1313.5 421.5 Q1318.5 420.5 1320.5 426" fill="none" stroke="#8c8c8c" stroke-width="1.8"/>
<text x="1327" y="431" font-family="Liberation Sans" font-size="19" fill="#8c8c8c">α</text>
<rect x="1310" y="458" width="12" height="7" fill="#8c8c8c"/>
<path d="M1313.5 453.5 Q1318.5 452.5 1320.5 458" fill="none" stroke="#8c8c8c" stroke-width="1.8"/>
<text x="1327" y="463" font-family="Liberation Sans" font-size="19" fill="#8c8c8c">α</text>
<rect x="1310" y="490" width="12" height="7" fill="#8aa0b6"/>
<path d="M1313.5 485.5 Q1318.5 484.5 1320.5 490" fill="none" stroke="#8aa0b6" stroke-width="1.8"/>
<text x="1327" y="495" font-family="Liberation Sans" font-size="19" fill="#8aa0b6">α</text>
<rect x="1310" y="522" width="12" height="7" fill="#8c8c8c"/>
<path d="M1313.5 517.5 Q1318.5 516.5 1320.5 522" fill="none" stroke="#8c8c8c" stroke-width="1.8"/>
<text x="1327" y="527" font-family="Liberation Sans" font-size="19" fill="#8c8c8c">α</text>
<g>
 <rect x="1346" y="418" width="15" height="15" rx="2" fill="#8c8c8c"/><rect x="1351" y="418" width="5" height="5" fill="#5a5a5a"/><rect x="1346" y="423" width="5" height="5" fill="#5a5a5a"/><rect x="1356" y="423" width="5" height="5" fill="#5a5a5a"/><rect x="1351" y="428" width="5" height="5" fill="#5a5a5a"/>
 <text x="1345" y="463" font-family="Liberation Sans" font-size="15" fill="#8c8c8c">Fx</text>
 <g fill="#8aa0b6"><rect x="1346" y="484" width="4" height="3"/><rect x="1351" y="484" width="4" height="3"/><rect x="1356" y="484" width="5" height="3"/><rect x="1346" y="488" width="6" height="3"/><rect x="1353" y="488" width="8" height="3"/><rect x="1346" y="492" width="4" height="3"/><rect x="1351" y="492" width="4" height="3"/><rect x="1356" y="492" width="5" height="3"/></g>
 <g fill="#8c8c8c"><rect x="1346" y="516" width="4" height="3"/><rect x="1351" y="516" width="4" height="3"/><rect x="1356" y="516" width="5" height="3"/><rect x="1346" y="520" width="6" height="3"/><rect x="1353" y="520" width="8" height="3"/><rect x="1346" y="524" width="4" height="3"/><rect x="1351" y="524" width="4" height="3"/><rect x="1356" y="524" width="5" height="3"/></g>
</g>
<!-- layer bottom buttons -->
<g fill="none" stroke="#e8e8e8" stroke-width="1.6">
 <path d="M1114.5 718.7 H1133 M1123.8 709.5 V728"/>
 <path d="M1162.5 709.8 H1177.8 V724.8 H1162.5 Z"/>
 <path d="M1158.6 713.5 V728.6 H1173.5"/>
 <path d="M1190 714 L1200 724 L1210 714" stroke-width="1.8"/>
 <path d="M1222 724.5 L1232 714.5 L1242 724.5" stroke-width="1.8"/>
 <path d="M1254 712.5 H1274 M1254 718.5 H1274 M1254 724.5 H1274"/>
</g>
<g fill="#e8e8e8">
 <circle cx="1269" cy="712.5" r="1.8"/><circle cx="1259" cy="718.5" r="1.8"/><circle cx="1267" cy="724.5" r="1.8"/>
 <path d="M1342 711.5 H1359 V713.5 H1342 Z M1347 708.5 H1354 V711.5 H1347 Z M1343.5 715 H1357.5 L1356.5 729 H1344.5 Z"/>
</g>
<path d="M1140 718 H1149 L1144.5 722 Z M1280 718 H1289 L1284.5 722 Z" fill="#8e8e8e"/>
<!-- history scrollbar -->
<rect x="1032.5" y="719.5" width="68" height="15" fill="none" stroke="#6a6a6a" stroke-width="1"/>
<rect x="1053" y="720" width="20" height="14" fill="#5b5b5b"/>
<path d="M1052.5 720 V734 M1080.5 720 V734" stroke="#6a6a6a"/>
<rect x="1040" y="724" width="5" height="5" fill="#eee"/>
<rect x="1088" y="724" width="5" height="5" fill="#eee"/>
<!-- status bar icons -->
<rect x="7.5" y="743.5" width="14.5" height="14.5" fill="none" stroke="#cfcfcf" stroke-width="1"/>
<circle cx="14.7" cy="750.7" r="4.5" fill="none" stroke="#aaa" stroke-width="1" stroke-dasharray="1 1"/>
<circle cx="945.7" cy="752" r="11" fill="#2b2b2b"/>
<path d="M939 752 H952.5" stroke="#eee" stroke-width="1"/>
<circle cx="939" cy="752" r="1.6" fill="#eee"/><circle cx="952.5" cy="752" r="1.6" fill="#eee"/>
<rect x="1257.5" y="749.5" width="81" height="5" rx="2.5" fill="#2f2f2f"/>
<rect x="1258" y="750" width="24" height="4" rx="2" fill="#6f90b2"/>
<rect x="1280.5" y="745.5" width="12" height="12" rx="2" fill="#3c3c3c" stroke="#222" stroke-width="1"/>
<g fill="none" stroke="#e0e0e0" stroke-width="1.2">
 <rect x="1345" y="746" width="16" height="10"/>
 <path d="M1353 756 V759 M1348 759.5 H1358"/>
</g>
<rect x="1352" y="750" width="2" height="2" fill="#e0e0e0"/>
<!-- canvas cursor -->
<g fill="none" stroke="#1e1e1e" stroke-width="1.3"><circle cx="588.5" cy="415.5" r="3.6" stroke-dasharray="3.5 2.2"/></g>
<!-- HISTORY THUMBS -->
<rect x="1035" y="106" width="48" height="48" fill="#b5bcc5"/>
<path d="M1055 140 Q1037 141 1041 149 Q1049 153 1081 143" fill="none" stroke="#8a9098" stroke-width="1.3"/>
<path d="M1082 108 L1064 127" stroke="#c3283a" stroke-width="9" stroke-linecap="butt"/>
<path d="M1060.5 123.5 L1067.5 130.5 L1055 140 Z" fill="#dcb886"/>
<path d="M1057.5 136 L1059 137.5 L1054.5 140.5 Z" fill="#2a2a2a" stroke="#2a2a2a" stroke-width="1.5"/>
<path d="M1079 109 L1065 124" stroke="#ffffff" stroke-opacity="0.35" stroke-width="1.5" stroke-dasharray="2 3"/>
<text x="1089" y="135" font-family="Liberation Sans" font-size="13" fill="#d8d8d8">c)</text>
<rect x="1032" y="154.5" width="52" height="1.5" fill="#1c1c1c"/>
<rect x="1035" y="156" width="48" height="48" fill="url(#thumbbg)"/>
<rect x="1035" y="156" width="48" height="48" fill="#f0f0f0"/>
<path d="M1037 177 L1049 167 L1057 169 L1071 181 L1067 189 L1059 201 L1039 201 Z" fill="#9c9c9c"/>
<path d="M1041 185 L1065 181" stroke="#f4f4f4" stroke-width="4"/>
<path d="M1082 158 L1066 176" stroke="#1e1e1e" stroke-width="10" stroke-linecap="round"/>
<path d="M1080 160 L1074 167" stroke="#b03040" stroke-width="3"/>
<text x="1089" y="185" font-family="Liberation Sans" font-size="13" fill="#d8d8d8">c)</text>
<rect x="1032" y="204.5" width="52" height="1.5" fill="#1c1c1c"/>
<rect x="1035" y="206" width="48" height="48" fill="url(#thumbbg)"/>
<path d="M1039 243 Q1045 233 1049 241 M1040 251 Q1048 239 1055 249 M1064 247 Q1071 235 1079 243" fill="none" stroke="#5e5e5e" stroke-width="4" opacity="0.8"/>
<path d="M1044 221 A4.5 4.5 0 0 1 1052 218" fill="none" stroke="#333" stroke-width="1.6"/>
<path d="M1052 224 A4.5 4.5 0 0 1 1044 226" fill="none" stroke="#333" stroke-width="1.6"/>
<path d="M1051 216 L1054 219 L1050 220 Z M1045 228 L1042 225 L1046 224 Z" fill="#333"/>
<path d="M1082 208 L1064 227" stroke="#d9a42c" stroke-width="9" stroke-linecap="butt"/>
<path d="M1060.5 223.5 L1067.5 230.5 L1055 240 Z" fill="#dcb886"/>
<path d="M1057.5 236 L1059 237.5 L1054.5 240.5 Z" fill="#2a2a2a" stroke="#2a2a2a" stroke-width="1.5"/>
<path d="M1079 209 L1065 224" stroke="#ffffff" stroke-opacity="0.35" stroke-width="1.5" stroke-dasharray="2 3"/>
<text x="1089" y="235" font-family="Liberation Sans" font-size="13" fill="#d8d8d8">c)</text>
<rect x="1032" y="254.5" width="52" height="1.5" fill="#1c1c1c"/>
<rect x="1035" y="256" width="48" height="48" fill="url(#thumbbg)"/>
<path d="M1037 289 Q1045 299 1061 293 L1065 301 L1039 304 Z" fill="#30b8e6"/>
<path d="M1082 258 L1067 272" stroke="#dcdccc" stroke-width="9"/>
<path d="M1061 267 L1072 278 L1062 289 L1050 278 Z" fill="#5aa2d2" stroke="#2f6fa0" stroke-width="1"/>
<text x="1089" y="285" font-family="Liberation Sans" font-size="13" fill="#d8d8d8">h)</text>
<rect x="1032" y="304.5" width="52" height="1.5" fill="#1c1c1c"/>
<rect x="1035" y="306" width="48" height="48" fill="url(#thumbbg)"/>
<path d="M1049 341 Q1049 317 1073 309 L1083 309 L1083 333 Q1069 345 1049 341 Z" fill="#7c7c7c"/>
<rect x="1041" y="341" width="30" height="11" fill="url(#chkw)" opacity="0.85"/>
<text x="1089" y="335" font-family="Liberation Sans" font-size="13" fill="#d8d8d8">a)</text>
<rect x="1032" y="354.5" width="52" height="1.5" fill="#1c1c1c"/>
<rect x="1035" y="356" width="48" height="48" fill="url(#thumbbg)"/>
<path d="M1038 399 Q1042 383 1046 399 Q1054 385 1060 399 Q1068 385 1081 393" fill="none" stroke="#7a86e0" stroke-width="5" opacity="0.9"/>
<path d="M1082 358 L1062 378" stroke="#2a80c0" stroke-width="4.5"/>
<path d="M1063 377 L1054 387" stroke="#8a5020" stroke-width="6"/>
<path d="M1044 371 A4.5 4.5 0 0 1 1052 368" fill="none" stroke="#333" stroke-width="1.6"/>
<path d="M1052 374 A4.5 4.5 0 0 1 1044 376" fill="none" stroke="#333" stroke-width="1.6"/>
<path d="M1051 366 L1054 369 L1050 370 Z M1045 378 L1042 375 L1046 374 Z" fill="#333"/>
<text x="1089" y="385" font-family="Liberation Sans" font-size="13" fill="#d8d8d8">j)</text>
<rect x="1032" y="404.5" width="52" height="1.5" fill="#1c1c1c"/>
<rect x="1035" y="406" width="48" height="48" fill="url(#thumbbg)"/>
<rect x="1040" y="433" width="28" height="18" fill="url(#chk4)" opacity="0.9"/>
<path d="M1083 408 L1083 423 L1065 439 L1055 427 L1071 408 Z" fill="#2c4e92"/>
<path d="M1055 427 L1065 439 L1060 445 L1048 433 Z" fill="#f6f6f6"/>
<text x="1089" y="435" font-family="Liberation Sans" font-size="13" fill="#d8d8d8">a)</text>
<rect x="1032" y="454.5" width="52" height="1.5" fill="#1c1c1c"/>
<rect x="1035" y="456" width="48" height="48" fill="url(#thumbbg)"/>
<path d="M1038 499.0 L1049 486" stroke="#5e5e5e" stroke-width="2.4" opacity="0.85"/>
<path d="M1063 501 L1070 488" stroke="#6a6a6a" stroke-width="2.4" opacity="0.8"/>
<path d="M1041 499.5 L1052 487" stroke="#5e5e5e" stroke-width="2.4" opacity="0.85"/>
<path d="M1067 501 L1074 488" stroke="#6a6a6a" stroke-width="2.4" opacity="0.8"/>
<path d="M1044 500.0 L1055 488" stroke="#5e5e5e" stroke-width="2.4" opacity="0.85"/>
<path d="M1071 501 L1078 488" stroke="#6a6a6a" stroke-width="2.4" opacity="0.8"/>
<path d="M1047 500.5 L1058 489" stroke="#5e5e5e" stroke-width="2.4" opacity="0.85"/>
<path d="M1075 501 L1082 488" stroke="#6a6a6a" stroke-width="2.4" opacity="0.8"/>
<path d="M1044 471 A4.5 4.5 0 0 1 1052 468" fill="none" stroke="#333" stroke-width="1.6"/>
<path d="M1052 474 A4.5 4.5 0 0 1 1044 476" fill="none" stroke="#333" stroke-width="1.6"/>
<path d="M1051 466 L1054 469 L1050 470 Z M1045 478 L1042 475 L1046 474 Z" fill="#333"/>
<path d="M1082 458 L1064 477" stroke="#c3283a" stroke-width="9" stroke-linecap="butt"/>
<path d="M1060.5 473.5 L1067.5 480.5 L1055 490 Z" fill="#dcb886"/>
<path d="M1057.5 486 L1059 487.5 L1054.5 490.5 Z" fill="#2a2a2a" stroke="#2a2a2a" stroke-width="1.5"/>
<path d="M1079 459 L1065 474" stroke="#ffffff" stroke-opacity="0.35" stroke-width="1.5" stroke-dasharray="2 3"/>
<text x="1089" y="485" font-family="Liberation Sans" font-size="13" fill="#d8d8d8">c)</text>
<rect x="1032" y="504.5" width="52" height="1.5" fill="#1c1c1c"/>
<rect x="1035" y="506" width="48" height="48" fill="url(#thumbbg)"/>
<path d="M1038 535 L1047 540 L1043 547 L1055 551 L1083 550 L1083 532 L1061 542 Z" fill="#8a8a8a" opacity="0.75"/>
<path d="M1044 516 H1051 L1046 525" fill="none" stroke="#333" stroke-width="1.5"/>
<path d="M1082 508 L1064 527" stroke="#d9a42c" stroke-width="9" stroke-linecap="butt"/>
<path d="M1060.5 523.5 L1067.5 530.5 L1055 540 Z" fill="#dcb886"/>
<path d="M1057.5 536 L1059 537.5 L1054.5 540.5 Z" fill="#2a2a2a" stroke="#2a2a2a" stroke-width="1.5"/>
<path d="M1079 509 L1065 524" stroke="#ffffff" stroke-opacity="0.35" stroke-width="1.5" stroke-dasharray="2 3"/>
<text x="1089" y="535" font-family="Liberation Sans" font-size="13" fill="#d8d8d8">c)</text>
<rect x="1032" y="554.5" width="52" height="1.5" fill="#1c1c1c"/>
<rect x="1035" y="556" width="48" height="48" fill="url(#thumbbg)"/>
<ellipse cx="1059" cy="595" rx="21" ry="6" fill="#a8a8a8" opacity="0.55"/>
<path d="M1082 558 L1064 577" stroke="#c3283a" stroke-width="9" stroke-linecap="butt"/>
<path d="M1060.5 573.5 L1067.5 580.5 L1055 590 Z" fill="#dcb886"/>
<path d="M1057.5 586 L1059 587.5 L1054.5 590.5 Z" fill="#2a2a2a" stroke="#2a2a2a" stroke-width="1.5"/>
<path d="M1079 559 L1065 574" stroke="#ffffff" stroke-opacity="0.35" stroke-width="1.5" stroke-dasharray="2 3"/>
<text x="1089" y="585" font-family="Liberation Sans" font-size="13" fill="#d8d8d8">c)</text>
<text x="1102" y="383" font-family="Liberation Sans" font-size="10" fill="#bbb">'</text>
</svg>
</body></html>
